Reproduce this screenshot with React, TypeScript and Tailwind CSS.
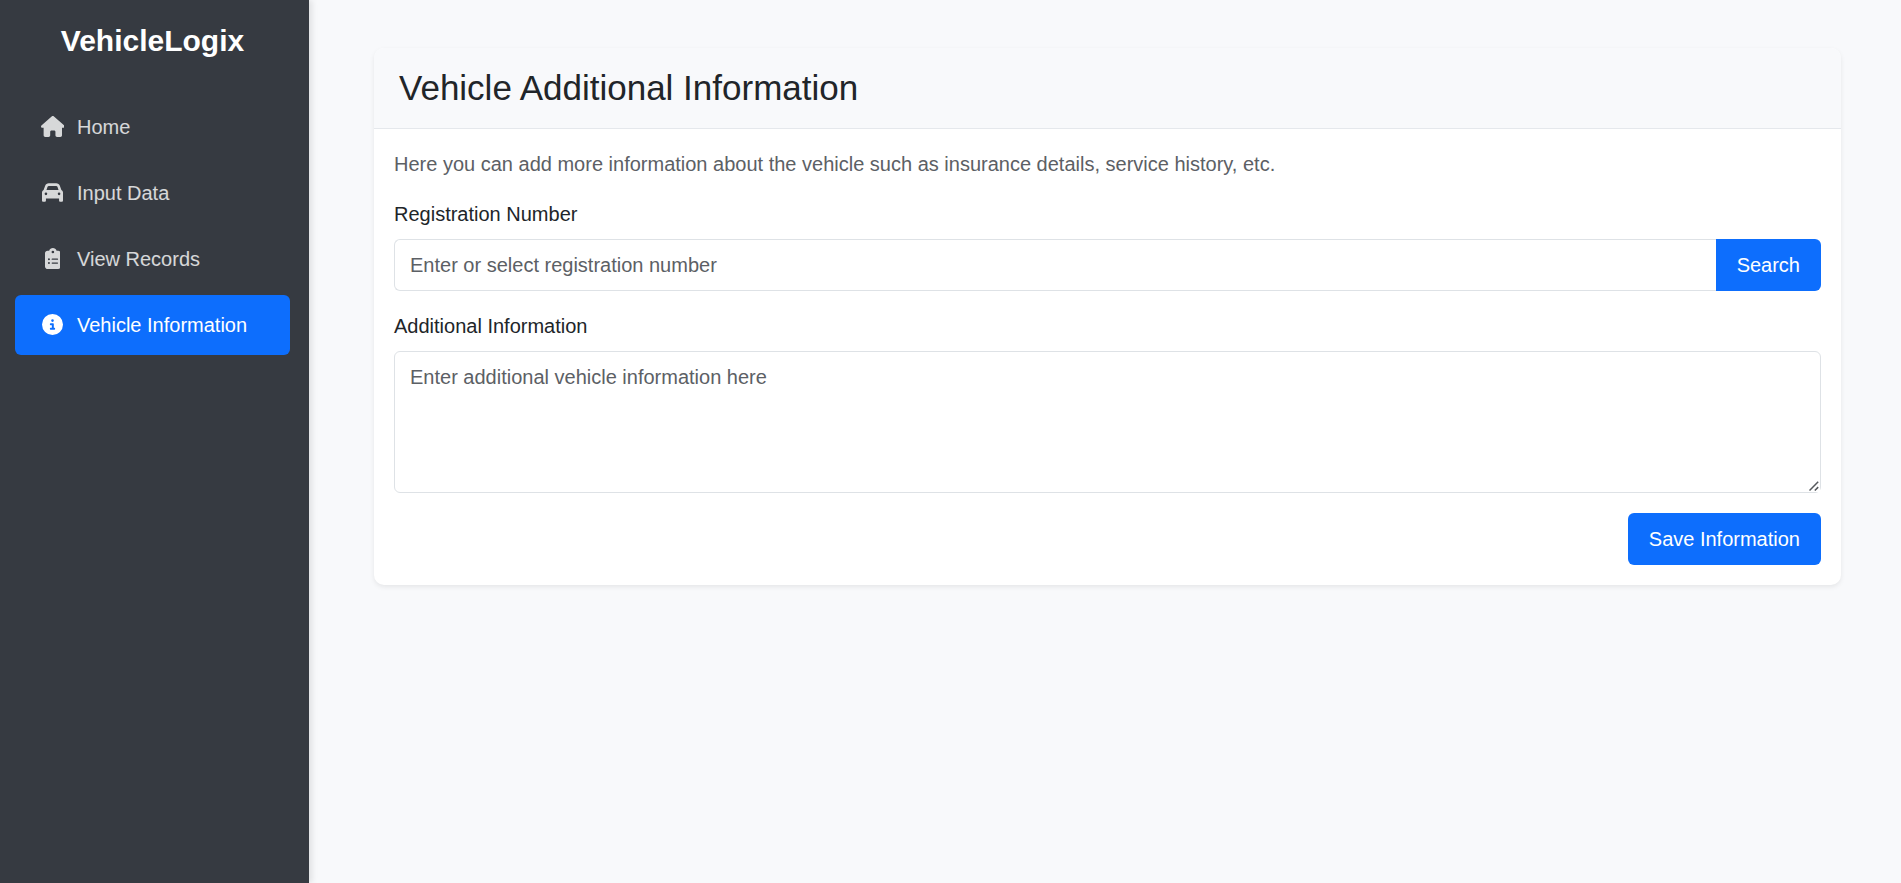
type Glyph = { width: number; path: string };
type NavItem = { label: string; glyph: Glyph; active?: boolean };

const house: Glyph = {
  width: 576,
  path: "M575.8 255.5c0 18-15 32.1-32 32.1h-32l.7 160.2c0 2.7-.2 5.4-.5 8.1V472c0 22.1-17.9 40-40 40H456c-1.1 0-2.2 0-3.3-.1c-1.4 .1-2.8 .1-4.2 .1H416 392c-22.1 0-40-17.9-40-40V448 384c0-17.7-14.3-32-32-32H256c-17.7 0-32 14.3-32 32v64 24c0 22.1-17.9 40-40 40H160 128.1c-1.5 0-3-.1-4.5-.2c-1.2 .1-2.4 .2-3.6 .2H104c-22.1 0-40-17.9-40-40V360c0-.9 0-1.9 .1-2.8V287.6H32c-18 0-32-14-32-32.1c0-9 3-17 10-24L266.4 8c7-7 15-8 22-8s15 2 21 7L564.8 231.5c8 7 12 15 11 24z",
};

const car: Glyph = {
  width: 512,
  path: "M135.2 117.4L109.1 192H402.9l-26.1-74.6C372.3 104.6 360.2 96 346.6 96H165.4c-13.6 0-25.7 8.6-30.2 21.4zM39.6 196.8L74.8 96.3C88.3 57.8 124.6 32 165.4 32H346.6c40.8 0 77.1 25.8 90.6 64.3l35.2 100.5c23.2 9.6 39.6 32.5 39.6 59.2V400v48c0 17.7-14.3 32-32 32H448c-17.7 0-32-14.3-32-32V400H96v48c0 17.7-14.3 32-32 32H32c-17.7 0-32-14.3-32-32V400 256c0-26.7 16.4-49.6 39.6-59.2zM128 288a32 32 0 1 0 -64 0 32 32 0 1 0 64 0zm288 32a32 32 0 1 0 0-64 32 32 0 1 0 0 64z",
};

const clipboardList: Glyph = {
  width: 384,
  path: "M192 0c-41.8 0-77.4 26.7-90.5 64H64C28.7 64 0 92.7 0 128V448c0 35.3 28.7 64 64 64H320c35.3 0 64-28.7 64-64V128c0-35.3-28.7-64-64-64H282.5C269.4 26.7 233.8 0 192 0zm0 64a32 32 0 1 1 0 64 32 32 0 1 1 0-64zM72 272a24 24 0 1 1 48 0 24 24 0 1 1 -48 0zm104-16H304c8.8 0 16 7.2 16 16s-7.2 16-16 16H176c-8.8 0-16-7.2-16-16s7.2-16 16-16zM72 368a24 24 0 1 1 48 0 24 24 0 1 1 -48 0zm88 0c0-8.8 7.2-16 16-16H304c8.8 0 16 7.2 16 16s-7.2 16-16 16H176c-8.8 0-16-7.2-16-16z",
};

const circleInfo: Glyph = {
  width: 512,
  path: "M256 512A256 256 0 1 0 256 0a256 256 0 1 0 0 512zM216 336h24V272H216c-13.3 0-24-10.7-24-24s10.7-24 24-24h48c13.3 0 24 10.7 24 24v88h8c13.3 0 24 10.7 24 24s-10.7 24-24 24H216c-13.3 0-24-10.7-24-24s10.7-24 24-24zm40-208a32 32 0 1 1 0 64 32 32 0 1 1 0-64z",
};

const navItems: NavItem[] = [
  { label: "Home", glyph: house },
  { label: "Input Data", glyph: car },
  { label: "View Records", glyph: clipboardList },
  { label: "Vehicle Information", glyph: circleInfo, active: true },
];

function Sidebar() {
  return (
    <aside className="w-[309px] shrink-0 bg-[#363a41] pt-[18px] pr-[19px] pl-[15px] shadow-[3px_0_6px_rgba(0,0,0,0.1)]">
      <div className="text-center text-[30px] leading-[45px] font-bold text-white">VehicleLogix</div>
      <nav className="mt-[34px]">
        <ul className="flex flex-col gap-1.5">
          {navItems.map(({ label, glyph, active }) => (
            <li key={label}>
              <a
                href="#"
                aria-current={active ? "page" : undefined}
                className={
                  active
                    ? "flex h-[60px] items-center gap-3 rounded-md bg-[#0d6efd] px-[25px] text-white"
                    : "flex h-[60px] items-center gap-3 rounded-md px-[25px] text-white/80"
                }
              >
                <span className="flex w-[25px] justify-center pb-px">
                  <svg
                    viewBox={`0 0 ${glyph.width} 512`}
                    className="h-[21px] w-auto"
                    fill="currentColor"
                    aria-hidden="true"
                  >
                    <path d={glyph.path} />
                  </svg>
                </span>
                {label}
              </a>
            </li>
          ))}
        </ul>
      </nav>
    </aside>
  );
}

export default function App() {
  return (
    <div className="flex min-h-screen bg-[#f8f9fb] font-['Liberation_Sans',Arial,sans-serif] text-[20px] leading-[30px] text-[#212529]">
      <Sidebar />
      <main className="min-w-0 flex-1 pt-12 pr-[60px] pb-12 pl-[65px]">
        <section className="overflow-hidden rounded-[10px] bg-white shadow-[0_2px_5px_rgba(0,0,0,0.08)]">
          <header className="border-b border-[#e5e8ec] bg-[#f8f9fb] px-[25px] py-[19px]">
            <h1 className="text-[35px] leading-[42px]">Vehicle Additional Information</h1>
          </header>
          <form className="flex flex-col gap-5 p-5" onSubmit={(e) => e.preventDefault()}>
            <p className="text-[#5c6065]">
              Here you can add more information about the vehicle such as insurance details, service history, etc.
            </p>
            <div className="flex flex-col gap-2.5">
              <label htmlFor="registration">Registration Number</label>
              <div className="flex">
                <input
                  id="registration"
                  type="text"
                  placeholder="Enter or select registration number"
                  className="h-[52px] min-w-0 flex-1 rounded-l-md border border-r-0 border-[#dee2e6] bg-white px-[15px] outline-none placeholder:text-[#5c6065]"
                />
                <button type="submit" className="h-[52px] rounded-r-md bg-[#0d6efd] px-[21px] text-white">
                  Search
                </button>
              </div>
            </div>
            <div className="flex flex-col gap-2.5">
              <label htmlFor="additional">Additional Information</label>
              <div className="relative">
                <textarea
                  id="additional"
                  placeholder="Enter additional vehicle information here"
                  className="block h-[142px] w-full resize-y rounded-md border border-[#dee2e6] bg-white px-[15px] py-2.5 outline-none placeholder:text-[#5c6065] [&::-webkit-resizer]:bg-white"
                />
                <svg
                  viewBox="0 0 10 10"
                  className="pointer-events-none absolute right-0.5 bottom-0.5 size-2.5"
                  fill="none"
                  stroke="#55585c"
                  strokeWidth="1.5"
                  aria-hidden="true"
                >
                  <path d="M.5 9.5 9.2 .8M5.8 9.5 9.2 6.1" />
                </svg>
              </div>
            </div>
            <button type="button" className="h-[52px] self-end rounded-md bg-[#0d6efd] px-[21px] text-white">
              Save Information
            </button>
          </form>
        </section>
      </main>
    </div>
  );
}
